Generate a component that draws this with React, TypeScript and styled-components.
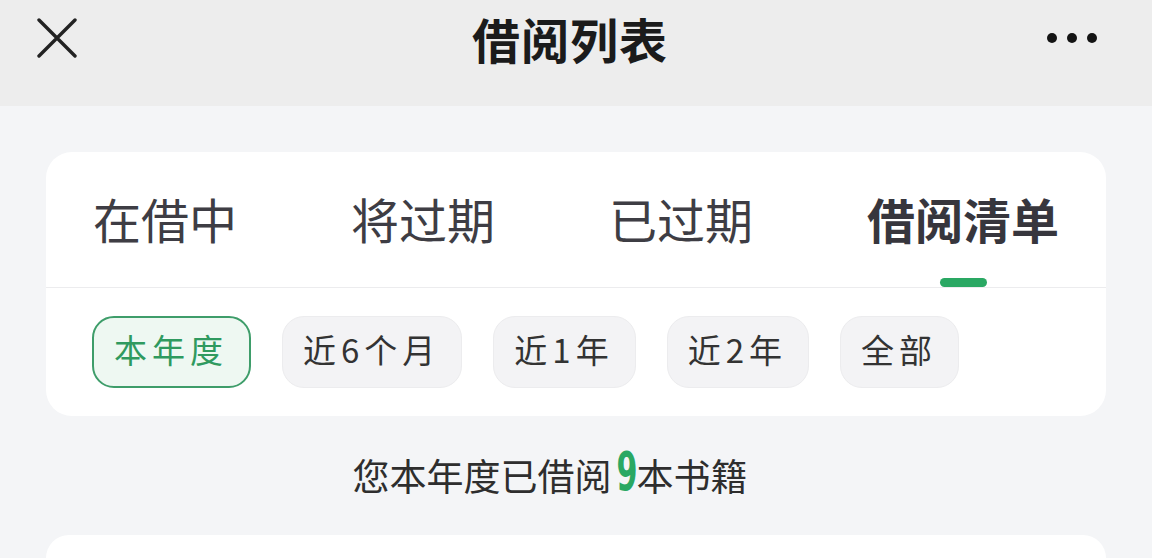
import styled, { createGlobalStyle } from "styled-components";

const FILTERS = ["本年度", "近6个月", "近1年", "近2年", "全部"];
const TABS = ["在借中", "将过期", "已过期", "借阅清单"];

function App() {
  const activeTab = 3;
  const activeFilter = 0;

  return (
    <>
      <GlobalStyle />
      <Page>
        <Header>
          <IconButton aria-label="关闭">
            <svg width="40" height="40" viewBox="0 0 40 40">
              <path
                d="M2 2 L38 38 M38 2 L2 38"
                stroke="#222"
                strokeWidth="3.4"
                strokeLinecap="round"
              />
            </svg>
          </IconButton>
          <Title>借阅列表</Title>
          <MoreButton aria-label="更多">
            <Dot />
            <Dot />
            <Dot />
          </MoreButton>
        </Header>

        <Main>
          <Card>
            <TabBar>
              {TABS.map((name, i) => (
                <Tab key={name} $active={i === activeTab}>
                  {name}
                  {i === activeTab && <Indicator />}
                </Tab>
              ))}
            </TabBar>
            <FilterRow>
              {FILTERS.map((name, i) => (
                <Chip key={name} $active={i === activeFilter}>
                  {name}
                </Chip>
              ))}
            </FilterRow>
          </Card>

          <Summary>
            您本年度已借阅<Count>9</Count>本书籍
          </Summary>

          <ListCard />
        </Main>
      </Page>
    </>
  );
}

export default App;

const GlobalStyle = createGlobalStyle`
  html, body {
    margin: 0;
    padding: 0;
    background: #f4f5f7;
  }

  body {
    font-family: "Noto Sans CJK SC", "Noto Sans", sans-serif;
  }

  * {
    box-sizing: border-box;
  }
`;

const Page = styled.div`
  width: 1152px;
  height: 558px;
  overflow: hidden;
  display: flex;
  flex-direction: column;
  background: #f4f5f7;
`;

const Header = styled.header`
  flex-shrink: 0;
  height: 106px;
  display: grid;
  grid-template-columns: 1fr auto 1fr;
  align-items: center;
  padding: 0 55px 30px 37px;
  background: #ededed;
`;

const IconButton = styled.button`
  justify-self: start;
  display: flex;
  padding: 0;
  border: none;
  background: transparent;
`;

const Title = styled.h1`
  margin: 0 0 0 6px;
  font-size: 48px;
  font-weight: 700;
  line-height: 1;
  color: #1b1b1b;
  letter-spacing: 1px;
`;

const MoreButton = styled.button`
  justify-self: end;
  display: flex;
  align-items: center;
  gap: 10px;
  padding: 0;
  border: none;
  background: transparent;
`;

const Dot = styled.span`
  width: 10px;
  height: 10px;
  border-radius: 50%;
  background: #141414;
`;

const Main = styled.main`
  flex: 1;
  display: flex;
  flex-direction: column;
  padding: 46px 46px 0;
`;

const Card = styled.section`
  background: #ffffff;
  border-radius: 26px;
  overflow: hidden;
`;

const TabBar = styled.nav`
  height: 136px;
  display: flex;
  justify-content: space-between;
  align-items: stretch;
  padding: 0 47px;
  border-bottom: 1px solid #ececee;
`;

const Tab = styled.div<{ $active: boolean }>`
  position: relative;
  display: flex;
  align-items: center;
  font-size: 48px;
  line-height: 1;
  font-weight: ${(p) => (p.$active ? 700 : 400)};
  color: ${(p) => (p.$active ? "#37363d" : "#3e3d44")};
  padding-bottom: 4px;
`;

const Indicator = styled.span`
  position: absolute;
  left: 50%;
  bottom: 0;
  width: 47px;
  height: 9px;
  margin-left: -23px;
  border-radius: 5px;
  background: #2aa863;
`;

const FilterRow = styled.div`
  display: flex;
  gap: 31px;
  padding: 28px 46px 28px;
`;

const Chip = styled.button<{ $active: boolean }>`
  height: 72px;
  padding: 0 21px 5px 20px;
  border-radius: 22px;
  font-family: inherit;
  font-size: 33px;
  letter-spacing: 5px;
  line-height: 1;
  border: ${(p) => (p.$active ? "2px solid #3e9d6a" : "1.5px solid #ececee")};
  background: ${(p) => (p.$active ? "#eef8f2" : "#f3f3f5")};
  color: ${(p) => (p.$active ? "#2f9a5f" : "#333333")};
`;

const Summary = styled.p`
  height: 119px;
  margin: 0;
  display: flex;
  align-items: center;
  justify-content: center;
  padding-right: 52px;
  font-size: 37px;
  line-height: 1;
  color: #2e2e2e;
`;

const Count = styled.span`
  display: inline-block;
  margin: -8px 1px 0 0;
  font-family: "DejaVu Sans Condensed", "DejaVu Sans", sans-serif;
  font-weight: 700;
  font-size: 54px;
  color: #2aa863;
  transform: scaleX(0.62);
  width: 24px;
  text-align: center;
  line-height: 1;
`;

const ListCard = styled.section`
  flex: 1;
  background: #ffffff;
  border-radius: 26px 26px 0 0;
`;
